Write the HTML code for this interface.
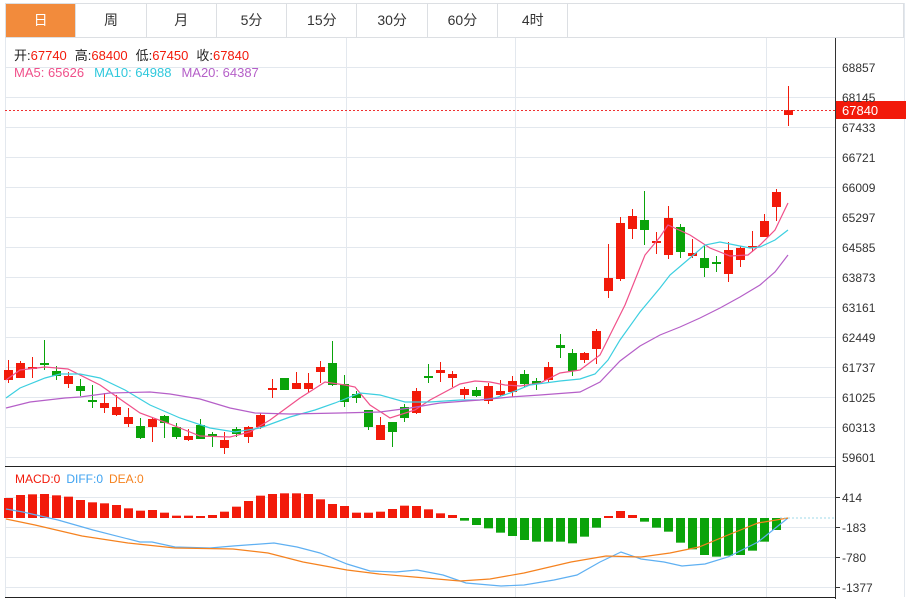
<!DOCTYPE html>
<html><head><meta charset="utf-8">
<style>
body{margin:0;background:#fff;width:911px;height:599px;overflow:hidden;font-family:"Liberation Sans","Noto Sans CJK SC",sans-serif;}
.tabs{position:absolute;left:5px;top:3px;height:35px;width:899px;border:1px solid #dcdfe3;border-bottom:1px solid #dcdfe3;box-sizing:border-box;display:flex;}
.tab{width:70.3px;height:100%;border-right:1px solid #dcdfe3;box-sizing:border-box;text-align:center;line-height:33px;font-size:14px;color:#333;}
.tab.on{background:#f28b3c;color:#fff;}
svg{position:absolute;left:0;top:0;}
</style></head><body>
<div class="tabs"><div class="tab on">日</div><div class="tab">周</div><div class="tab">月</div><div class="tab">5分</div><div class="tab">15分</div><div class="tab">30分</div><div class="tab">60分</div><div class="tab">4时</div></div>
<svg id="s" width="911" height="599" xmlns="http://www.w3.org/2000/svg" font-family="Liberation Sans, Noto Sans CJK SC, sans-serif">
<g stroke="#e3e8ee" stroke-width="1">
<line x1="5" y1="67.5" x2="835" y2="67.5"/><line x1="5" y1="97.5" x2="835" y2="97.5"/><line x1="5" y1="127.5" x2="835" y2="127.5"/><line x1="5" y1="157.5" x2="835" y2="157.5"/><line x1="5" y1="187.5" x2="835" y2="187.5"/><line x1="5" y1="217.5" x2="835" y2="217.5"/><line x1="5" y1="247.5" x2="835" y2="247.5"/><line x1="5" y1="277.5" x2="835" y2="277.5"/><line x1="5" y1="307.5" x2="835" y2="307.5"/><line x1="5" y1="337.5" x2="835" y2="337.5"/><line x1="5" y1="367.5" x2="835" y2="367.5"/><line x1="5" y1="397.5" x2="835" y2="397.5"/><line x1="5" y1="427.5" x2="835" y2="427.5"/><line x1="5" y1="457.5" x2="835" y2="457.5"/>
<line x1="5" y1="497.5" x2="835" y2="497.5"/><line x1="5" y1="527.5" x2="835" y2="527.5"/><line x1="5" y1="557.5" x2="835" y2="557.5"/><line x1="5" y1="587.5" x2="835" y2="587.5"/>
<line x1="346.5" y1="38" x2="346.5" y2="597"/><line x1="515.5" y1="38" x2="515.5" y2="597"/><line x1="766.5" y1="38" x2="766.5" y2="597"/>
<line x1="5.5" y1="38" x2="5.5" y2="597"/><line x1="904.5" y1="3" x2="904.5" y2="597"/>
</g>
<g id="c"></g>
<line x1="5" y1="110.5" x2="836" y2="110.5" stroke="#f03030" stroke-dasharray="2,2"/>
<line x1="780" y1="518" x2="836" y2="518" stroke="#9fd8e8" stroke-dasharray="2,2"/>
<line x1="835.5" y1="38" x2="835.5" y2="599" stroke="#333"/>
<line x1="5" y1="466.5" x2="836" y2="466.5" stroke="#222"/>
<line x1="5" y1="597.5" x2="836" y2="597.5" stroke="#222"/>
<rect x="836" y="101" width="70" height="18" fill="#f21a0a"/>
<text x="842" y="115" font-size="13" fill="#fff">67840</text>
<g font-size="12" fill="#333">
<text x="842" y="72">68857</text><text x="842" y="102">68145</text><text x="842" y="132">67433</text><text x="842" y="162">66721</text><text x="842" y="192">66009</text><text x="842" y="222">65297</text><text x="842" y="252">64585</text><text x="842" y="282">63873</text><text x="842" y="312">63161</text><text x="842" y="342">62449</text><text x="842" y="372">61737</text><text x="842" y="402">61025</text><text x="842" y="432">60313</text><text x="842" y="462">59601</text>
<text x="842" y="502">414</text><text x="842" y="532">-183</text><text x="842" y="562">-780</text><text x="842" y="592">-1377</text>
</g>
<g stroke="#333"><line x1="836" y1="497.5" x2="840" y2="497.5"/><line x1="836" y1="527.5" x2="840" y2="527.5"/><line x1="836" y1="557.5" x2="840" y2="557.5"/><line x1="836" y1="587.5" x2="840" y2="587.5"/></g>
<text x="14" y="60" font-size="13"><tspan fill="#222">开:</tspan><tspan fill="#f21a0a">67740</tspan><tspan fill="#222" dx="8">高:</tspan><tspan fill="#f21a0a">68400</tspan><tspan fill="#222" dx="8">低:</tspan><tspan fill="#f21a0a">67450</tspan><tspan fill="#222" dx="8">收:</tspan><tspan fill="#f21a0a">67840</tspan></text>
<text x="14" y="77" font-size="13"><tspan fill="#f0508a">MA5: 65626</tspan><tspan fill="#2fc8dc" dx="10">MA10: 64988</tspan><tspan fill="#b55fc8" dx="10">MA20: 64387</tspan></text>
<text x="15" y="483" font-size="12"><tspan fill="#f21a0a">MACD:0</tspan><tspan fill="#3ea2f0" dx="6">DIFF:0</tspan><tspan fill="#f5821f" dx="6">DEA:0</tspan></text>
</svg>
<script>
var C=[[370,380,360,383,'r'],[363,378,361,378,'r'],[367,369,357,378,'r'],[363,365,340,370,'g'],[371,376,366,380,'g'],[376,384,372,388,'r'],[386,391,379,396,'g'],[400,401,385,408,'g'],[403,408,393,413,'r'],[407,415,395,416,'r'],[417,424,408,427,'r'],[426,438,418,439,'g'],[419,427,417,442,'r'],[416,423,415,438,'g'],[427,437,423,439,'g'],[436,440,429,441,'r'],[425,439,419,439,'g'],[434,436,432,447,'g'],[440,448,432,454,'r'],[429,434,427,437,'g'],[427,437,426,443,'r'],[415,427,413,429,'r'],[388,389,379,398,'r'],[378,390,378,390,'g'],[383,389,372,389,'r'],
[383,389,373,392,'r'],[367,372,361,383,'r'],[363,385,341,386,'g'],[384,402,375,407,'g'],[394,398,391,403,'g'],[410,427,410,430,'g'],[425,440,417,440,'r'],[422,432,422,447,'g'],[407,418,404,422,'g'],[391,413,388,414,'r'],[376,378,364,383,'g'],[370,373,362,382,'r'],[374,378,371,387,'r'],[389,395,387,399,'r'],[390,396,387,397,'g'],[386,401,383,404,'r'],[391,395,380,396,'r'],[381,392,376,397,'r'],[374,384,370,387,'g'],[381,384,378,390,'g'],[367,380,362,382,'r'],[345,348,334,358,'g'],[353,371,349,376,'g'],[353,360,352,363,'r'],[331,349,329,364,'r'],
[278,291,244,298,'r'],[223,279,217,281,'r'],[216,229,209,239,'r'],[220,230,191,245,'g'],[241,243,232,254,'r'],[218,255,206,259,'r'],[227,252,224,258,'g'],[253,256,239,258,'r'],[258,268,244,277,'g'],[262,264,256,272,'g'],[250,274,242,282,'r'],[248,260,246,267,'r'],[246,248,231,252,'r'],[221,237,214,237,'r'],[192,207,189,221,'r'],[110,115,86,126,'r']];
var R='#f21a0a',G='#0aa30a',h='';
C.forEach(function(c,i){var x=8+12*i,col=c[4]=='r'?R:G;h+='<line x1="'+(x+.5)+'" y1="'+c[2]+'" x2="'+(x+.5)+'" y2="'+c[3]+'" stroke="'+col+'"/>';var bh=Math.max(2,c[1]-c[0]);h+='<rect x="'+(x-4)+'" y="'+c[0]+'" width="9" height="'+bh+'" fill="'+col+'"/>';});
var M=[114,105,103,102,106,110,120,127,130,135,145,152,150,158,167,167,168,165,155,140,123,107,102,100,100,102,118,132,138,158,158,155,147,137,138,148,160,165,182,195,205,218,228,240,245,245,245,250,230,203,170,153,165,185,203,215,248,268,285,290,287,285,272,245,210];
M.forEach(function(v,i){var x=8+12*i,y=460+v/3,z=518;if(i==50){h+='<rect x="'+(x-4)+'" y="516" width="9" height="2" fill="'+R+'"/>';return;}var col=y<z?R:G;h+='<rect x="'+(x-4)+'" y="'+Math.min(y,z)+'" width="9" height="'+Math.abs(y-z)+'" fill="'+col+'"/>';});
function pl(p,c){return '<polyline fill="none" stroke="'+c+'" stroke-width="1.2" points="'+p+'"/>';}
h+=pl('6,380 20,370 45,367 68,369 100,385 140,413 170,424 200,436 230,437 250,432 270,420 300,398 325,382 345,385 355,387 370,405 390,418 415,410 430,400 460,384 475,381 490,382 505,385 520,386 540,383 560,373 580,370 600,355 610,335 625,305 645,255 660,237 668,225 690,235 710,248 730,256 748,255 760,245 775,230 788,203','#f0508a');
h+=pl('6,398 20,388 45,378 60,374 80,374 100,378 125,390 150,405 180,418 210,428 235,432 260,428 290,417 315,410 335,403 360,393 380,395 405,402 430,402 460,400 480,400 495,398 510,393 530,385 560,381 580,379 595,374 608,360 620,340 640,312 660,288 670,275 690,258 705,245 720,242 735,245 750,248 760,247 775,240 788,230','#3ccfe0');
h+=pl('6,408 30,402 65,398 80,397 110,393 150,392 170,394 200,399 230,408 255,413 290,414 340,413 380,412 410,408 440,403 480,400 510,397 540,395 580,392 600,382 620,361 640,346 660,335 680,327 700,318 720,308 740,297 760,285 775,272 788,255','#b55fc8');
h+=pl('6,509 23,512 58,520 93,530 140,542 152,542 175,547 210,548 233,546 274,543 297,547 320,553 347,564 370,571 396,572 417,570 443,575 466,583 501,586 524,585 554,580 577,575 600,562 621,552 641,559 664,562 682,566 705,564 728,557 758,542 788,518','#5fb0f2');
h+=pl('6,519 35,525 82,536 128,543 175,548 233,549 268,553 303,562 347,570 379,574 414,577 460,581 490,579 524,573 571,562 606,556 641,557 670,553 699,547 728,535 758,523 788,518','#f5821f');
document.getElementById('c').innerHTML=h;
</script>
</body></html>
